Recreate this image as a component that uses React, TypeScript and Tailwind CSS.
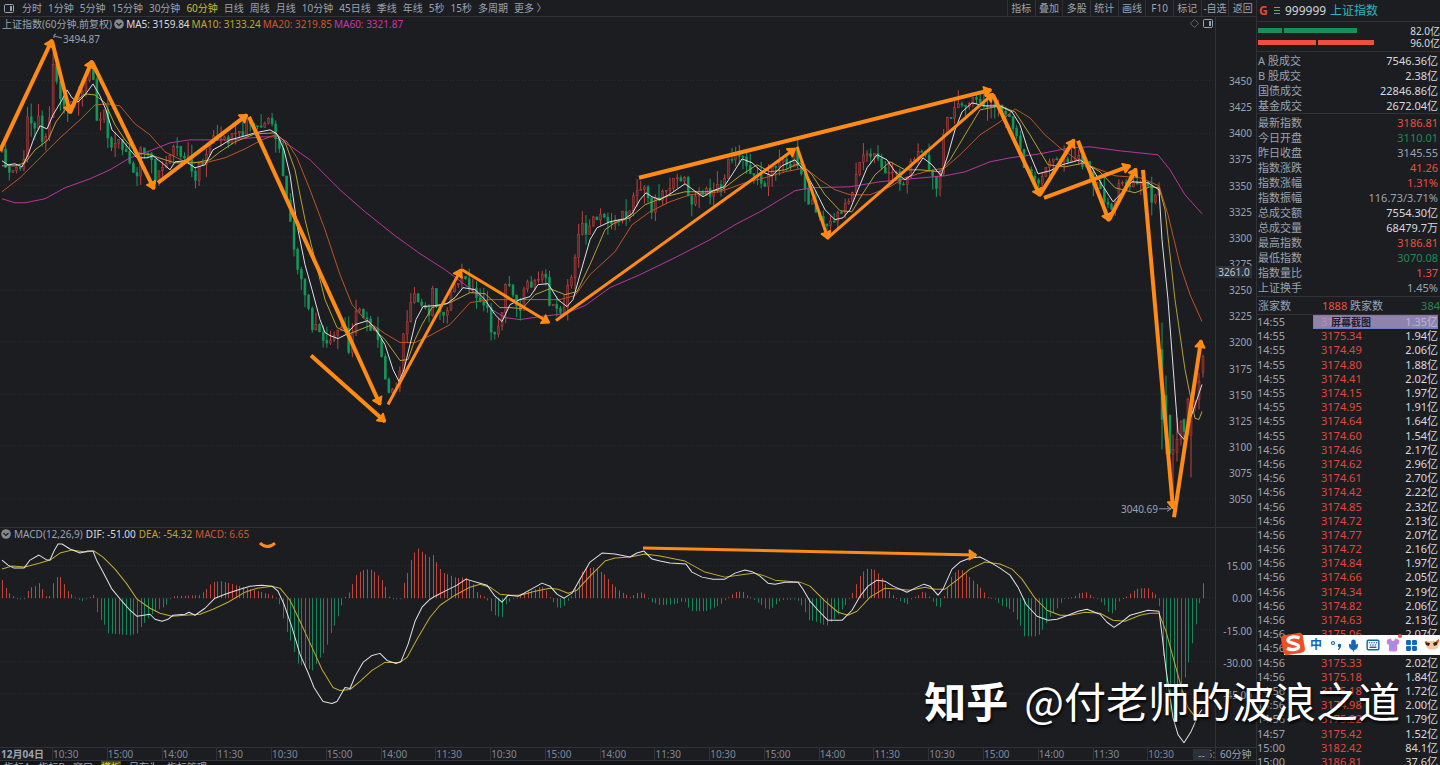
import { Diamond, Mic, Keyboard, Shirt, LayoutGrid } from "lucide-react";

type Pt = [number, number];

const PERIODS = [
  "分时", "1分钟", "5分钟", "15分钟", "30分钟", "60分钟", "日线", "周线", "月线",
  "10分钟", "45日线", "季线", "年线", "5秒", "15秒", "多周期", "更多 〉",
];
const TOOLS = ["指标", "叠加", "多股", "统计", "画线", "F10", "标记", "-自选", "返回"];
const PRICES = [
  3450, 3425, 3400, 3375, 3350, 3325, 3300, 3275, 3250, 3225, 3200, 3175, 3150,
  3125, 3100, 3075, 3050,
];
const TIMES = ["10:30", "15:00", "14:00", "11:30"];
const BOTTOM_TABS = ["指标A", "指标B", "窗口", "模板", "另存为", "指标管理"];

const W = "text-[#d8dade]";
const G = "text-[#9aa3b0]";
const R = "text-[#e8503f]";
const GR = "text-[#1f8a55]";

const TURNOVER = [
  ["A 股成交", "7546.36亿", W],
  ["B 股成交", "2.38亿", W],
  ["国债成交", "22846.86亿", W],
  ["基金成交", "2672.04亿", W],
];
const STATS = [
  ["最新指数", "3186.81", R],
  ["今日开盘", "3110.01", GR],
  ["昨日收盘", "3145.55", G],
  ["指数涨跌", "41.26", R],
  ["指数涨幅", "1.31%", R],
  ["指数振幅", "116.73/3.71%", G],
  ["总成交额", "7554.30亿", W],
  ["总成交量", "68479.7万", W],
  ["最高指数", "3186.81", R],
  ["最低指数", "3070.08", GR],
  ["指数量比", "1.37", R],
  ["上证换手", "1.45%", G],
];
const TICKS = [
  ["14:55", "3175.10", "1.35"], ["14:55", "3175.34", "1.94"], ["14:55", "3174.49", "2.06"],
  ["14:55", "3174.80", "1.88"], ["14:55", "3174.41", "2.02"], ["14:55", "3174.15", "1.97"],
  ["14:55", "3174.95", "1.91"], ["14:55", "3174.64", "1.64"], ["14:55", "3174.60", "1.54"],
  ["14:56", "3174.46", "2.17"], ["14:56", "3174.62", "2.96"], ["14:56", "3174.61", "2.70"],
  ["14:56", "3174.42", "2.22"], ["14:56", "3174.85", "2.32"], ["14:56", "3174.72", "2.13"],
  ["14:56", "3174.77", "2.07"], ["14:56", "3174.72", "2.16"], ["14:56", "3174.84", "1.97"],
  ["14:56", "3174.66", "2.05"], ["14:56", "3174.34", "2.19"], ["14:56", "3174.82", "2.06"],
  ["14:56", "3174.63", "2.13"], ["14:56", "3175.06", "2.07"], ["14:56", "3175.20", "2.04"],
  ["14:56", "3175.33", "2.02"], ["14:56", "3175.18", "1.84"], ["14:56", "3175.18", "1.72"],
  ["14:56", "3174.98", "2.00"], ["14:56", "3175.22", "1.79"], ["14:57", "3175.42", "1.52"],
  ["15:00", "3182.42", "84.1"], ["15:00", "3186.81", "37.6"],
];

const MA5 =
  "2,161 8,165 15,164 22,167 28,155 34,138 40,126 47,129 53,115 62,100 67,90 72,98 78,102 85,95 93,84 100,96 106,110 112,130 122,140 130,150 137,158 147,158 153,156 162,163 170,170 175,162 185,161 195,168 205,165 213,150 222,145 230,140 245,136 255,133 270,130 277,134 284,150 290,175 297,225 305,265 312,290 320,320 325,333 330,336 338,339 346,335 355,325 368,321 376,330 385,345 393,370 399,382 404,370 410,345 416,320 423,307 435,306 447,304 455,298 463,288 475,290 485,300 495,315 502,322 510,305 520,300 530,297 538,285 548,284 558,300 567,307 573,300 580,275 590,240 597,228 610,222 625,219 632,214 640,200 646,193 652,197 660,200 672,193 685,184 693,190 703,197 713,191 724,187 732,175 742,159 752,163 762,172 772,176 782,166 795,160 805,172 815,190 825,210 835,220 843,218 850,210 858,190 867,168 877,155 887,160 895,172 905,180 912,175 923,158 932,165 941,176 948,155 955,130 962,112 972,103 985,106 1000,106 1012,112 1020,125 1028,150 1038,174 1050,171 1062,165 1080,160 1092,168 1102,185 1113,202 1120,195 1132,182 1148,183 1159,190 1162,240 1168,300 1174,380 1178,433 1184,440 1190,420 1197,400 1202,385";
const MA10 =
  "2,166 15,166 25,163 35,150 48,140 56,122 65,110 75,102 85,94 95,95 105,103 115,125 125,140 137,153 150,155 165,160 175,163 195,163 210,160 220,152 235,142 255,134 275,133 285,142 295,170 305,220 315,260 325,300 337,328 350,334 370,326 385,340 400,361 408,360 415,340 422,325 432,308 450,303 470,293 485,294 500,308 510,308 522,309 535,295 550,289 565,295 577,292 590,265 605,230 615,223 630,218 645,205 665,197 685,192 705,192 722,190 740,176 757,165 770,172 785,170 800,163 812,175 825,195 840,211 852,212 862,195 875,175 890,162 905,170 920,170 940,172 950,160 965,135 980,110 1000,106 1015,112 1030,135 1048,165 1065,167 1085,163 1100,172 1115,188 1135,193 1150,187 1159,188 1165,210 1175,300 1185,370 1190,395 1195,419 1199,420 1202,412";
const MA20 =
  "2,192 20,178 40,158 60,138 80,120 95,105 108,104 120,106 135,124 150,135 165,152 185,162 205,163 225,158 245,149 262,140 275,135 287,142 297,158 310,190 325,230 340,275 352,305 365,320 385,334 400,343 415,343 430,336 450,325 470,303 490,300 560,300 575,296 590,275 615,252 632,225 650,212 670,202 690,195 720,192 745,183 765,178 785,172 805,168 820,180 835,190 850,195 870,195 890,187 905,178 925,172 945,168 960,155 980,135 1000,122 1015,109 1030,118 1045,135 1060,148 1080,162 1100,170 1115,176 1140,178 1159,186 1168,215 1180,265 1190,295 1202,322";
const MA60 =
  "2,199 15,203 25,203 45,199 65,188 90,179 110,170 130,158 150,151 170,143 190,140 230,140 262,137 275,137 290,146 310,160 340,190 365,212 395,236 420,254 445,270 465,285 480,297 492,310 505,318 520,320 540,317 565,314 585,306 610,288 640,275 675,258 710,240 735,225 760,212 780,200 795,191 810,188 850,187 880,182 900,180 945,176 965,172 990,162 1010,158 1040,154 1070,148 1090,147 1120,151 1158,155 1170,170 1185,195 1202,214";

const DIF =
  "2,561 8,566 14,569 24,569 30,561 39,556 47,561 50,561 54,552 58,545 62,545 70,550 80,554 88,552 93,552 97,562 103,573 112,590 122,602 130,611 137,617 150,615 155,620 162,622 168,620 173,616 185,615 189,613 195,616 205,609 215,599 225,595 240,590 250,587 262,586 272,587 278,592 284,605 292,628 300,655 308,673 314,688 323,702 332,704 337,702 345,688 350,689 355,677 363,663 372,656 380,654 387,661 396,664 401,662 408,645 415,622 422,608 430,600 435,597 445,592 457,586 466,580 480,584 487,586 495,597 502,603 508,596 518,597 524,594 535,588 542,584 550,587 557,595 564,599 572,594 580,580 590,563 602,554 615,555 630,558 637,554 644,552 652,560 660,562 670,564 686,565 692,573 702,578 713,580 725,580 735,574 745,571 753,573 760,577 768,584 775,585 785,583 798,583 803,590 810,602 818,611 828,621 842,621 852,611 860,597 868,587 877,581 885,582 893,587 907,593 915,589 924,585 930,587 938,596 943,590 952,570 960,563 970,559 980,558 990,563 1000,569 1010,576 1018,588 1026,605 1037,617 1048,621 1057,620 1068,616 1078,612 1087,610 1100,615 1107,623 1114,628 1120,624 1130,616 1148,611 1159,612 1162,635 1166,670 1173,718 1178,735 1184,743 1191,732 1199,714 1202,710";
const DEA =
  "2,570 12,567 25,568 40,564 50,561 60,554 72,551 85,553 94,552 103,558 115,570 127,585 137,600 150,609 160,614 172,617 185,616 200,615 213,610 228,603 245,593 257,589 272,587 280,589 290,601 300,622 312,648 322,670 333,688 340,691 350,690 360,682 372,671 385,663 400,663 407,658 417,640 430,618 440,606 455,596 470,588 480,585 490,588 500,595 510,596 520,596 535,592 550,589 558,590 568,594 577,591 590,577 605,562 615,559 630,558 645,555 660,557 685,562 705,573 725,578 740,576 755,574 765,577 775,581 800,583 810,587 825,602 838,613 848,616 857,612 870,598 885,589 900,590 910,591 925,588 935,590 945,590 958,580 970,570 985,563 1000,565 1012,570 1022,580 1035,599 1047,611 1060,616 1070,616 1085,613 1100,614 1113,621 1125,622 1140,616 1150,614 1159,614 1166,632 1175,665 1182,690 1188,708 1195,717 1199,717";

// closing levels of the index, x then y
const CLOSES: Pt[] = [
  [2, 155], [5, 160], [9, 178], [14, 168], [20, 170], [24, 158], [27, 120], [31, 125], [35, 128], [38, 107], [42, 138],
  [45, 143], [49, 130], [51, 52], [53, 60], [55, 78], [58, 85], [62, 100], [66, 112], [70, 105], [80, 95], [84, 85], [89, 75],
  [92, 72], [95, 95], [97, 122], [101, 125], [104, 112], [107, 138], [112, 143], [118, 140], [122, 150], [126, 155], [130, 163],
  [137, 172], [140, 148], [152, 155], [155, 182], [160, 172], [164, 162], [170, 158], [173, 146], [177, 150], [180, 161],
  [190, 160], [195, 182], [199, 165], [205, 158], [209, 150], [213, 137], [218, 145], [226, 141], [243, 135], [247, 120],
  [252, 128], [265, 127], [270, 122], [275, 135], [280, 155], [284, 180], [288, 215], [293, 240], [297, 268], [303, 290],
  [308, 310], [312, 332], [316, 325], [320, 335], [325, 345], [328, 335], [334, 340], [340, 325], [345, 325], [349, 352],
  [352, 330], [357, 312], [363, 318], [370, 325], [375, 335], [380, 350], [385, 372], [387, 398], [393, 388], [398, 385],
  [402, 345], [406, 325], [410, 310], [415, 298], [420, 305], [430, 312], [432, 288], [436, 300], [440, 315], [445, 312],
  [450, 298], [455, 290], [460, 277], [465, 282], [470, 285], [477, 300], [482, 298], [487, 310], [490, 332], [500, 330],
  [505, 280], [510, 290], [515, 300], [520, 310], [524, 285], [530, 288], [535, 277], [545, 272], [549, 300], [555, 315],
  [564, 308], [568, 280], [573, 270], [578, 240], [582, 225], [586, 230], [593, 222], [603, 217], [610, 222], [628, 215],
  [633, 193], [643, 187], [646, 195], [652, 208], [656, 198], [662, 193], [670, 185], [677, 183], [684, 172], [687, 190],
  [691, 212], [695, 195], [702, 195], [713, 190], [725, 182], [728, 160], [740, 156], [747, 162], [750, 172], [754, 178],
  [758, 170], [765, 188], [768, 178], [772, 170], [778, 160], [783, 158], [787, 168], [795, 153], [798, 163], [802, 178],
  [805, 188], [808, 205], [812, 202], [817, 212], [822, 222], [827, 231], [830, 222], [840, 212], [845, 203], [852, 196],
  [856, 177], [859, 162], [867, 155], [877, 155], [882, 166], [885, 173], [890, 178], [895, 170], [899, 182], [907, 178],
  [911, 160], [922, 150], [925, 160], [932, 168], [936, 186], [940, 176], [943, 142], [947, 120], [954, 115], [958, 103],
  [962, 100], [970, 104], [980, 101], [987, 108], [997, 106], [1003, 112], [1010, 118], [1015, 130], [1020, 150], [1023, 168],
  [1033, 180], [1038, 187], [1043, 170], [1050, 163], [1067, 158], [1080, 158], [1087, 168], [1092, 180], [1100, 190],
  [1108, 205], [1113, 210], [1118, 187], [1127, 182], [1148, 184], [1151, 197], [1156, 200], [1159, 192],
];

// the final sell-off and rebound: x, high, body top, body bottom, low, rising
const LAST: [number, number, number, number, number, number][] = [
  [1162, 323, 350, 420, 450, 0], [1166, 376, 396, 440, 455, 0], [1170, 415, 416, 454, 455, 0],
  [1173, 435, 450, 455, 500, 1], [1177, 418, 440, 453, 462, 1], [1181, 421, 422, 440, 446, 1],
  [1184, 419, 420, 432, 440, 0], [1188, 398, 400, 425, 436, 1], [1191, 398, 405, 436, 478, 1],
  [1195, 400, 402, 408, 412, 1], [1199, 373, 382, 400, 410, 1], [1203, 355, 357, 373, 378, 1],
];

// histogram heights in pixels, positive above the zero line
const HIST: Pt[] = [
  [2, 18], [5, 12], [9, 5], [13, 2], [17, -1], [24, -1], [27, 6], [31, 11], [35, 12], [38, 17], [42, 9], [46, 2], [50, 2],
  [53, 15], [56, 21], [60, 21], [64, 14], [68, 7], [72, 3], [76, 0], [82, -3], [88, 0], [93, 3], [96, -12], [100, -20],
  [105, -28], [108, -35], [130, -37], [137, -35], [142, -27], [148, -20], [155, -13], [165, -8], [172, 2], [200, 3],
  [205, 8], [212, 16], [222, 17], [232, 14], [243, 11], [258, 7], [265, 5], [272, 3], [276, 0], [280, -8], [285, -28],
  [290, -42], [298, -65], [305, -69], [312, -72], [318, -62], [325, -52], [332, -32], [338, -18], [343, 0], [348, 3],
  [352, 14], [356, 23], [362, 28], [370, 29], [376, 25], [382, 18], [386, 9], [390, -1], [400, -1], [403, 12], [407, 25],
  [411, 38], [415, 48], [419, 50], [423, 45], [429, 41], [433, 43], [438, 31], [444, 25], [457, 20], [465, 21], [472, 16],
  [478, 4], [486, 1], [490, -12], [496, -18], [502, -19], [506, -6], [512, -1], [518, 1], [525, 6], [533, 8], [541, 12],
  [545, 9], [550, 1], [556, -9], [562, -10], [567, -4], [573, 5], [578, 17], [583, 29], [595, 31], [600, 27], [605, 23],
  [612, 14], [620, 7], [630, 1], [636, 5], [643, 6], [647, 0], [652, -4], [660, -7], [675, -6], [684, -2], [690, -13],
  [705, -13], [713, -10], [722, -5], [728, 1], [735, 6], [742, 7], [748, 2], [753, -1], [760, -6], [767, -12], [773, -9],
  [780, -2], [797, -1], [803, -10], [809, -22], [818, -24], [826, -28], [835, -20], [843, -10], [850, 1], [856, 14],
  [862, 26], [868, 30], [875, 28], [882, 20], [888, 8], [895, 1], [900, -3], [907, -6], [912, 0], [918, 3], [923, 7],
  [927, 4], [932, -2], [936, -8], [940, -9], [944, 2], [950, 20], [957, 28], [963, 28], [970, 20], [977, 14], [983, 7],
  [988, 1], [994, 0], [1000, -7], [1007, -9], [1013, -14], [1019, -25], [1024, -38], [1038, -38], [1044, -28],
  [1051, -17], [1058, -9], [1064, 0], [1073, 1], [1079, 5], [1087, 6], [1093, 1], [1098, -1], [1104, -7], [1110, -17],
  [1115, -12], [1120, -1], [1125, 1], [1132, 6], [1138, 10], [1148, 10], [1154, 4], [1158, 3], [1161, -30], [1165, -85],
  [1169, -110], [1173, -122], [1177, -110], [1181, -98], [1184, -84], [1188, -64], [1192, -45], [1196, -26], [1199, -5],
  [1202, 15],
];

const STEP = 3.65;

function at(points: Pt[], x: number) {
  const i = points.findIndex((p) => p[0] >= x);
  if (i < 0) return points[points.length - 1][1];
  if (i === 0) return points[0][1];
  const [x0, y0] = points[i - 1];
  const [x1, y1] = points[i];
  return y0 + ((y1 - y0) * (x - x0)) / (x1 - x0);
}

function noise(i: number) {
  const n = Math.sin(i * 12.9898) * 43758.5453;
  return n - Math.floor(n);
}

function Candles() {
  const bars = [];
  let prev = 152;
  for (let i = 0; i < 318; i++) {
    const x = 2 + i * STEP;
    const close = at(CLOSES, x) + (noise(i) - 0.5) * 11;
    const top = Math.min(prev, close);
    const bottom = Math.max(prev, close);
    bars.push([
      x,
      top - noise(i + 500) ** 2 * 14,
      top,
      bottom,
      bottom + noise(i + 900) ** 2 * 14,
      close < prev ? 1 : 0,
    ]);
    prev = close;
  }
  return (
    <g>
      {[...bars, ...LAST].map(([x, high, top, bottom, low, up], i) => {
        const color = up ? "#c2413f" : "#12995c";
        return (
          <g key={i}>
            <rect x={x - 0.5} y={high} width={1} height={low - high} fill={color} />
            <rect
              x={x - 1}
              y={top}
              width={2}
              height={Math.max(1, bottom - top)}
              fill={up ? "#5e2829" : color}
              stroke={color}
              strokeWidth={0.5}
            />
          </g>
        );
      })}
    </g>
  );
}

function Histogram() {
  return (
    <g>
      {Array.from({ length: 330 }, (_, i) => {
        const x = Math.round(2 + i * STEP);
        const h = at(HIST, x);
        return (
          <rect
            key={i}
            x={x}
            y={h > 0 ? 599 - h : 599}
            width={1}
            height={Math.max(1, Math.abs(h))}
            fill={h > 0 ? "#c0463c" : "#1b8559"}
          />
        );
      })}
    </g>
  );
}

function Arrow({ from, to, w = 4 }: { from: Pt; to: Pt; w?: number }) {
  const a = Math.atan2(to[1] - from[1], to[0] - from[0]);
  const corner = (s: number, d: number) =>
    `${to[0] - d * Math.cos(a + s)},${to[1] - d * Math.sin(a + s)}`;
  return (
    <g stroke="#ff8a14" fill="#ff8a14" strokeLinejoin="round">
      <line x1={from[0]} y1={from[1]} x2={to[0]} y2={to[1]} strokeWidth={w} />
      <polygon
        points={`${to[0]},${to[1]} ${corner(0.6, 8)} ${corner(0, 6)} ${corner(-0.6, 8)}`}
        strokeWidth={2}
      />
    </g>
  );
}

function Grid({ ys }: { ys: number[] }) {
  return (
    <g stroke="#2b2d32" strokeDasharray="1 2">
      {ys.map((y) => (
        <line key={y} x1={0} x2={1215} y1={y + 0.5} y2={y + 0.5} />
      ))}
    </g>
  );
}

function PriceChart() {
  return (
    <svg
      className="block h-full w-full"
      viewBox="0 30 1215 498"
      preserveAspectRatio="none"
      role="img"
      aria-label="上证指数 60分钟 K线"
    >
      <Grid ys={[80, 133, 185, 237, 290, 342, 394, 446, 499]} />
      <Candles />
      <g fill="none" strokeWidth={1} strokeLinejoin="round">
        <polyline points={MA60} stroke="#b9359f" />
        <polyline points={MA20} stroke="#bd5426" />
        <polyline points={MA10} stroke="#b3a136" />
        <polyline points={MA5} stroke="#dfe1e6" />
      </g>
      <Arrow from={[0, 151]} to={[52, 40]} />
      <Arrow from={[52, 41]} to={[70, 113]} />
      <Arrow from={[70, 113]} to={[92, 61]} />
      <Arrow from={[92, 62]} to={[154, 189]} />
      <Arrow from={[158, 183]} to={[247, 115]} />
      <Arrow from={[249, 117]} to={[380, 405]} />
      <Arrow from={[311, 356]} to={[385, 422]} />
      <Arrow from={[388, 405]} to={[461, 270]} w={3} />
      <Arrow from={[462, 270]} to={[549, 323]} w={3} />
      <Arrow from={[556, 321]} to={[795, 149]} w={3} />
      <Arrow from={[797, 147]} to={[828, 239]} w={3} />
      <Arrow from={[828, 238]} to={[993, 94]} w={3} />
      <Arrow from={[639, 178]} to={[991, 90]} />
      <Arrow from={[993, 95]} to={[1040, 196]} />
      <Arrow from={[1040, 195]} to={[1074, 140]} />
      <Arrow from={[1078, 141]} to={[1109, 221]} />
      <Arrow from={[1109, 220]} to={[1136, 169]} />
      <Arrow from={[1044, 198]} to={[1130, 166]} />
      <Arrow from={[1143, 170]} to={[1173, 509]} />
      <Arrow from={[1174, 518]} to={[1201, 341]} />
      <path d="M54 38v-3l2-1M54 36l8 2" fill="none" stroke="#8d97a5" />
      <path d="M1159 509.500h12M1167 507l4 2.500-4 2.500" fill="none" stroke="#8d97a5" />
      <g fill="#9aa3b0" fontSize={10}>
        <text x={63} y={43}>3494.87</text>
        <text x={1121} y={514}>3040.69</text>
      </g>
    </svg>
  );
}

function MacdChart() {
  return (
    <svg
      className="block h-full w-full"
      viewBox="0 541 1215 206"
      preserveAspectRatio="none"
      role="img"
      aria-label="MACD"
    >
      <Grid ys={[566, 598, 630, 662, 694]} />
      <Histogram />
      <g fill="none" strokeWidth={1} strokeLinejoin="round">
        <polyline points={DEA} stroke="#c2aa32" />
        <polyline points={DIF} stroke="#dfe1e6" />
      </g>
      <Arrow from={[643, 549]} to={[976, 556]} w={3} />
      <path d="M260 544q7 7 15 0" fill="none" stroke="#ff8a14" strokeWidth={3} />
    </svg>
  );
}

function ToggleDot() {
  return (
    <svg className="h-[10px] w-[10px] shrink-0" viewBox="0 0 10 10" aria-hidden="true">
      <circle cx="5" cy="5" r="4.800" fill="#85888d" />
      <path d="M2.500 4L5 6.500 7.500 4" fill="none" stroke="#1c1d21" strokeWidth="1.200" />
    </svg>
  );
}

function PanelIcon() {
  return (
    <svg className="h-[9px] w-[10px] shrink-0" viewBox="0 0 10 9" aria-hidden="true">
      <rect x="0.500" y="0.500" width="9" height="8" rx="1" fill="none" stroke="currentColor" />
      <rect x="6" y="2" width="2" height="5" fill="currentColor" />
    </svg>
  );
}

function StatTable({ rows }: { rows: string[][] }) {
  return (
    <table className="w-full">
      <tbody>
        {rows.map(([label, value, color]) => (
          <tr key={label} className="h-[15px] leading-[15px]">
            <th className="pl-px text-left font-normal text-[#9aa3b0]">{label}</th>
            <td className={`pr-0.5 text-right ${color}`}>{value}</td>
          </tr>
        ))}
      </tbody>
    </table>
  );
}

function InputMethodBar() {
  return (
    <div className="absolute right-0 top-[635px] z-20 flex h-5 w-[156px] items-center justify-between bg-white pl-6 text-[#1467b8]">
      <svg className="absolute -left-1 -top-1 h-[26px] w-[26px]" viewBox="0 0 26 26" aria-hidden="true">
        <rect x="2" y="3" width="22" height="20" rx="4" fill="#ee4f24" transform="rotate(-10 13 13)" />
        <path
          d="M19.500 7c-5-2.200-11.500-.8-11.500 2.300 0 3.500 10.500 2.700 10.500 6.200 0 3-7 4.200-11.500 1.700"
          fill="none"
          stroke="#fff"
          strokeWidth="3.400"
        />
      </svg>
      <button className="w-4 text-[12px] font-bold leading-none">中</button>
      <svg className="h-3 w-3" viewBox="0 0 12 12" aria-hidden="true">
        <circle cx="3" cy="4" r="1.500" fill="none" stroke="currentColor" strokeWidth="1.200" />
        <path d="M8 5h3v3l-2 3H8l1-3H8z" fill="currentColor" />
      </svg>
      <Mic size={13} strokeWidth={2.5} fill="currentColor" />
      <Keyboard size={14} strokeWidth={2.5} />
      <span className="relative">
        <Shirt size={14} fill="#a58df0" stroke="#d77bc0" />
        <span className="absolute -right-0.5 -top-1 h-1 w-1 rounded-full bg-[#f2564b]" />
      </span>
      <LayoutGrid size={13} fill="currentColor" />
      <svg className="h-3.5 w-4" viewBox="0 0 16 14" aria-hidden="true">
        <path d="M1 5q7-4 14-1l-1 6q-6 3-11 0z" fill="#f7c9a0" />
        <path d="M1 4l5 1-1 3-3-1zM9 5l5-2-1 4-3 1z" fill="#4a1d12" />
        <path d="M0 4l3-1 1 2zM12 3l3-2v3z" fill="#e8531f" />
      </svg>
    </div>
  );
}

export default function App() {
  return (
    <div className="relative flex h-screen overflow-hidden bg-[#1c1d21] font-['Noto_Sans','Noto_Sans_CJK_SC',sans-serif] text-[10px] leading-3 text-[#9aa3b0]">
      <main className="flex min-w-0 flex-1 flex-col">
        <nav className="flex h-[17px] shrink-0 items-center justify-between border-b border-[#303238]">
          <div className="flex items-center gap-1.5 whitespace-nowrap pl-1">
            <button className="mr-0.5" aria-label="侧栏">
              <PanelIcon />
            </button>
            {PERIODS.map((p) => (
              <button key={p} className={p === "60分钟" ? "text-[#c9bd2c]" : ""}>
                {p}
              </button>
            ))}
          </div>
          <div className="grid h-4 w-[249px] grid-cols-9">
            {TOOLS.map((t) => (
              <button key={t} className="whitespace-nowrap border-l border-[#303238]">
                {t}
              </button>
            ))}
          </div>
        </nav>

        <section className="flex min-h-0 flex-[7]">
          <div className="flex min-w-0 flex-1 flex-col border-r border-[#303238]">
            <header className="flex h-[13px] shrink-0 items-center gap-0.5 whitespace-nowrap px-0.5">
              <h1>上证指数(60分钟.前复权)</h1>
              <ToggleDot />
              <span className="text-[#d8dade]">MA5: 3159.84</span>
              <span className="text-[#c0a52f]">MA10: 3133.24</span>
              <span className="text-[#d0572a]">MA20: 3219.85</span>
              <span className="text-[#c736a8]">MA60: 3321.87</span>
              <span className="ml-auto flex items-center gap-1">
                <Diamond size={9} strokeWidth={1.5} />
                <PanelIcon />
              </span>
            </header>
            <div className="min-h-0 flex-1">
              <PriceChart />
            </div>
          </div>
          <div className="relative flex w-10 shrink-0 flex-col justify-between pb-[22px] pr-1 pt-[58px] text-right">
            {PRICES.map((p) => (
              <span key={p}>{p}</span>
            ))}
            <span className="absolute left-0 top-[249px] w-9 bg-[#2c3038] text-center text-[#c3c8d0]">
              3261.0
            </span>
          </div>
        </section>

        <section className="flex min-h-0 flex-[3] border-t border-[#303238]">
          <div className="flex min-w-0 flex-1 flex-col border-r border-[#303238]">
            <header className="flex h-3 shrink-0 items-center gap-[3px] whitespace-nowrap pl-px">
              <ToggleDot />
              <h2>MACD(12,26,9)</h2>
              <span className="text-[#d8dade]">DIF: -51.00</span>
              <span className="text-[#c0a52f]">DEA: -54.32</span>
              <span className="text-[#d0572a]">MACD: 6.65</span>
            </header>
            <div className="min-h-0 flex-1">
              <MacdChart />
            </div>
          </div>
          <div className="flex w-10 shrink-0 flex-col justify-between pb-[46px] pr-1 pt-8 text-right">
            {["15.00", "0.00", "-15.00", "-30.00", "-45.00"].map((v) => (
              <span key={v}>{v}</span>
            ))}
          </div>
        </section>

        <div className="flex h-[14px] shrink-0 border-y border-[#303238] text-[#7d8898]">
          <span className="w-[52px] shrink-0 whitespace-nowrap pl-px font-bold text-[#9aa3b0]">12月04日</span>
          {Array.from({ length: 21 }, (_, i) => (
            <span key={i} className="min-w-0 flex-1 border-l border-[#303238]">
              {TIMES[i % 4]}
            </span>
          ))}
          <span className="flex w-[14px] shrink-0 justify-end border-r border-[#303238]">5:</span>
          <span className="w-10 shrink-0 pl-1 text-[#9aa3b0]">60分钟</span>
        </div>
        <div className="flex h-1 shrink-0 gap-2 overflow-hidden bg-[#141518] pl-1">
          {BOTTOM_TABS.map((t) => (
            <button key={t} className={t === "模板" ? "h-3 bg-[#4a4a14] text-[#d8d02c]" : "h-3"}>
              {t}
            </button>
          ))}
        </div>
      </main>

      <aside className="flex w-[184px] shrink-0 flex-col border-l border-[#303238] text-[11px]">
        <header className="flex h-[22px] shrink-0 items-center border-b border-[#303238] pl-0.5 text-[12px]">
          <b className="w-[15px] text-[#e0483c]">G</b>
          <svg className="mr-1 h-2 w-[7px]" viewBox="0 0 7 8" aria-hidden="true">
            <path d="M0 .5h6M0 3.500h6M0 6.500h6" stroke="#6fa568" />
          </svg>
          <span className="w-[45px] text-[#d0d3d8]">999999</span>
          <span className="text-[#25b8c4]">上证指数</span>
        </header>
        <div className="flex h-[30px] shrink-0 flex-col justify-center border-b border-[#303238] pl-px text-[10px] text-[#d8dade]">
          <div className="flex items-center gap-0.5">
            <i className="h-[5px] w-6 bg-[#159058]" />
            <i className="h-[5px] w-[73px] bg-[#159058]" />
            <span className="ml-auto">82.0亿</span>
          </div>
          <div className="flex items-center gap-0.5">
            <i className="h-[5px] w-[58px] bg-[#ee4f3c]" />
            <i className="h-[5px] w-14 bg-[#ee4f3c]" />
            <span className="ml-auto">96.0亿</span>
          </div>
        </div>
        <div className="shrink-0 border-b border-[#303238] pt-px">
          <StatTable rows={TURNOVER} />
        </div>
        <div className="shrink-0 border-b border-[#303238] py-px">
          <StatTable rows={STATS} />
        </div>
        <div className="flex h-[18px] shrink-0 items-center border-b border-[#303238] pl-px">
          <span className="w-16">涨家数</span>
          <span className="w-7 text-[#e8503f]">1888</span>
          <span>跌家数</span>
          <span className="ml-auto text-[#1f8a55]">384</span>
        </div>
        <div className="relative min-h-0 flex-1 overflow-hidden">
          <table className="h-[454px] w-full leading-[14px]">
            <tbody>
              {TICKS.map(([time, price, amount], i) => (
                <tr key={i}>
                  <td className="w-16 p-0">{time}</td>
                  <td className="p-0 text-[#e0483c]">{price}</td>
                  <td className="p-0 pr-0.5 text-right text-[#d8dade]">{amount}亿</td>
                </tr>
              ))}
            </tbody>
          </table>
          <div className="absolute right-0.5 top-0 h-[14px] w-[125px] border border-[#6d7fc0] bg-[#b3a5dc]/75 pl-[17px] text-[10px] font-bold leading-3 text-[#22202e]">
            屏幕截图
          </div>
        </div>
      </aside>

      <span className="absolute bottom-1 right-[230px] h-3 w-[17px] bg-[#2c3038] text-center">--</span>
      <InputMethodBar />
      <div className="pointer-events-none absolute bottom-10 right-10 z-10 flex items-center gap-4 whitespace-nowrap font-['Noto_Sans_CJK_SC',sans-serif] text-[42px] leading-[50px] text-white [text-shadow:1px_2px_3px_#000]">
        <b>知乎</b>
        <span>@付老师的波浪之道</span>
      </div>
    </div>
  );
}
